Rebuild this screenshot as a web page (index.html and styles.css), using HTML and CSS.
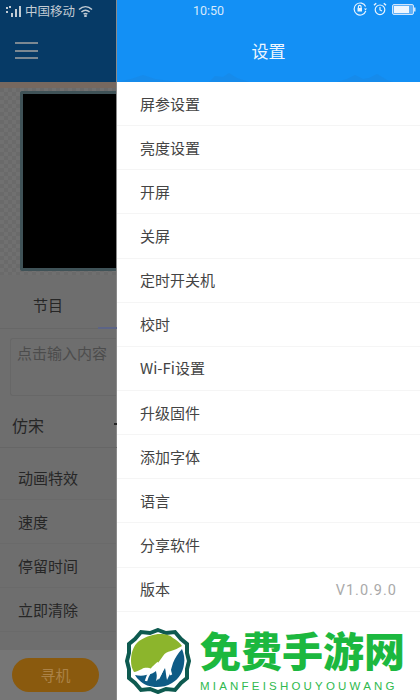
FILE: index.html
```html
<!DOCTYPE html>
<html lang="zh">
<head>
  <meta charset="UTF-8">
  <meta name="viewport" content="width=device-width, initial-scale=1.0">
  <title>设置</title>
  <link rel="stylesheet" href="styles.css">
</head>
<body>
  <div class="screen">

    <!-- 被遮住的主界面 -->
    <div class="main">
      <div class="topbar">
        <div class="status-left">
          <svg class="signal" width="16" height="12" viewBox="0 0 16 12">
            <rect x="0" y="2" width="2" height="2" fill="#c3ccd4"/>
            <rect x="3" y="1" width="2" height="2" fill="#c3ccd4"/>
            <rect x="0" y="6" width="2" height="2" fill="#c3ccd4"/>
            <rect x="5" y="8" width="2" height="4" fill="#c3ccd4"/>
            <rect x="9" y="4" width="2" height="8" fill="#c3ccd4"/>
            <rect x="13" y="1" width="2" height="11" fill="#c3ccd4"/>
          </svg>
          <span>中国移动</span>
          <svg class="wifi" width="15" height="12" viewBox="0 0 15 12" fill="none" stroke="#c3ccd4" stroke-width="1.5">
            <path d="M1 4.5C5 .8 10 .8 14 4.5"/>
            <path d="M3.4 7C6 4.7 9 4.7 11.6 7"/>
            <path d="M5.6 9.2C6.8 8.2 8.2 8.2 9.4 9.2"/>
            <circle cx="7.5" cy="11" r=".6"/>
          </svg>
        </div>
        <div class="menu-btn"><i></i><i></i><i></i></div>
      </div>
      <div class="band"></div>
      <div class="preview-wrap"><div class="preview"></div></div>
      <div class="tabs"><span>节目</span><i class="tab-line"></i></div>
      <div class="input-box">点击输入内容</div>
      <div class="font-row"><span>仿宋</span><i class="font-arrow"></i></div>
      <div class="opt">动画特效</div>
      <div class="opt">速度</div>
      <div class="opt">停留时间</div>
      <div class="opt">立即清除</div>
      <div class="bottom-bar"><div class="find-btn">寻机</div></div>
    </div>

    <!-- 设置抽屉 -->
    <div class="drawer">
      <div class="drawer-head">
        <div class="status-right">
          <span class="time">10:50</span>
          <div class="status-icons">
            <svg width="15" height="14" viewBox="0 0 15 14" fill="none" stroke="#e8f3fe" stroke-width="1.2">
              <path d="M12.6 4.5A6 6 0 1 0 12.8 9"/>
              <path d="M11 6.5h3l-1.500 2z" fill="#e8f3fe" stroke="none"/>
              <rect x="4.500" y="6" width="4.500" height="3.500" fill="#e8f3fe" stroke="none"/>
              <path d="M5.400 6V4.800a1.300 1.300 0 0 1 2.700 0V6"/>
            </svg>
            <svg width="14" height="14" viewBox="0 0 14 14" fill="none" stroke="#e8f3fe" stroke-width="1.2">
              <circle cx="7" cy="7.800" r="4.800"/>
              <path d="M7 5v3l2 1"/>
              <path d="M1 3.200L3.200 1.200M13 3.200L10.800 1.200" stroke-width="1.500"/>
            </svg>
            <svg width="24" height="11" viewBox="0 0 24 11">
              <rect x="0.500" y="0.500" width="21" height="10" rx="1.500" fill="#5fb0f8" stroke="#cfe5fc"/>
              <rect x="2" y="2" width="15" height="7" fill="#eef6fe"/>
              <rect x="22" y="3.500" width="1.500" height="4" fill="#cfe5fc"/>
            </svg>
          </div>
        </div>
        <h1>设置</h1>
        <svg class="hills" width="303" height="12" viewBox="0 0 303 12">
          <path d="M0 12L14 9 26 5 38 9 60 12zM92 12l6-6 8 1 6-4 8 5 12 4zM220 12l10-3 8-4 8 4 6-1 8-4 10 6 6 2z" fill="#1a86e2" opacity=".55"/>
        </svg>
      </div>

      <ul class="menu">
        <li>屏参设置</li>
        <li>亮度设置</li>
        <li>开屏</li>
        <li>关屏</li>
        <li>定时开关机</li>
        <li>校时</li>
        <li>Wi-Fi设置</li>
        <li>升级固件</li>
        <li>添加字体</li>
        <li>语言</li>
        <li>分享软件</li>
        <li>版本<span class="version">V1.0.9.0</span></li>
      </ul>

      <div class="brand">
        <svg class="brand-logo" width="66" height="66" viewBox="0 0 66 66">
          <path d="M33 2l8 3 9-1 6 7 6 5 0 9 2 8-2 8 0 9-6 5-6 7-9-1-8 3-8-3-9 1-6-7-6-5 0-9-2-8 2-8 0-9 6-5 6-7 9 1z" fill="#fff" stroke="#0e5a50" stroke-width="4"/>
          <path d="M6 33C6 25 8 18 14 13 22 8 29 6 35 6c6 0 10 1 13 4 4 2 7 5 9 8-4 2-7 4-11 5-4 1-6 2-8 5-3 4-6 9-11 13-3-1-7-2-10 0-3 1-6 3-8 3-2-3-3-7-3-11z" fill="#8cb52c"/>
          <path d="M57 21c2 5 3 10 2 15-1 8-5 15-12 19-5 3-10 4-15 4-7 0-13-2-18-7-2-2-3-3-4-5 4 1 8 1 11 0 5-1 8-2 10-4 1 3 1 6 0 10 4-3 6-8 9-13 1 4 1 8 2 12 3-5 4-11 6-17 2-5 5-10 9-14z" fill="#0e5b85"/>
          <path d="M21 53c2-7 6-13 11-17 1 4 0 8 2 13 4-7 5-16 11-22-1 7-1 14 1 20" fill="none" stroke="#fff" stroke-width="2.500"/>
        </svg>
        <div class="brand-text">
          <div class="brand-name">免费手游网</div>
          <div class="brand-pinyin">MIANFEISHOUYOUWANG</div>
        </div>
      </div>
    </div>
  </div>
</body>
</html>
```

FILE: styles.css
```css
* { box-sizing: border-box; }
html, body { margin: 0; padding: 0; }
body { width: 420px; height: 700px; overflow: hidden; font-family: "Noto Sans CJK SC", "Noto Sans", sans-serif; background: #6f6f6f; }
.screen { display: flex; width: 420px; height: 700px; }

/* main */
.main { width: 117px; height: 700px; overflow: hidden; flex: none; display: flex; flex-direction: column; background: #6e6e6e; color: #262626; }
.topbar { height: 82px; flex: none; background: #063a66; padding: 3px 0 0 6px; }
.status-left { display: flex; align-items: center; height: 15px; font-size: 12.500px; line-height: 15px; color: #c3ccd4; white-space: nowrap; }
.signal { margin-right: 3px; }
.wifi { margin-left: 3px; }
.menu-btn { display: flex; flex-direction: column; gap: 5.500px; width: 23px; margin: 24px 0 0 9px; }
.menu-btn i { display: block; height: 2px; background: #7b8892; }
.band { height: 6px; flex: none; background: #76685f; }
.preview-wrap { height: 187px; flex: none; padding: 3px 0 0 20px; background: repeating-conic-gradient(#707070 0 25%, #6a6a6a 0 50%) 0 0 / 8px 8px; }
.preview { width: 110px; height: 180px; background: #000; border: 3px solid #3f5257; border-right: none; border-radius: 3px 0 0 3px; }
.tabs { height: 54px; flex: none; position: relative; padding: 19px 0 0 33px; font-size: 15px; line-height: 22px; border-bottom: 1px solid #676767; }
.tab-line { position: absolute; left: 98px; right: 0; bottom: -1px; height: 2px; background: #5c6486; }
.input-box { height: 58px; flex: none; margin: 9px 0 0 10px; padding: 3px 0 0 6px; border: 1px solid #676767; border-right: none; border-radius: 3px 0 0 3px; font-size: 15px; line-height: 22px; color: #4c4c4c; white-space: nowrap; }
.font-row { height: 52px; flex: none; position: relative; padding: 17px 0 0 12px; font-size: 16px; line-height: 24px; border-bottom: 1px solid #666; }
.font-arrow { position: absolute; left: 114px; top: 27px; width: 3px; height: 2px; background: #262626; }
.opt { height: 44.100px; flex: none; padding: 0 0 0 18px; font-size: 15px; line-height: 44px; border-bottom: 1px solid #6a6a6a; white-space: nowrap; }
.font-row + .opt { margin-top: 8px; }
.bottom-bar { flex: 1; margin-top: 18px; padding: 8px 0 0 12px; background: #767676; }
.find-btn { width: 87px; height: 34px; border-radius: 17px; background: #8a5a0e; color: #ab8247; font-size: 15px; line-height: 34px; text-align: center; }

/* drawer */
.drawer { flex: 1; display: flex; flex-direction: column; background: #fff; box-shadow: -1px 0 0 #8a8a8a; }
.drawer-head { height: 82px; flex: none; position: relative; background: #1390f5; color: #fff; }
.status-right { position: relative; display: flex; align-items: center; height: 20px; }
.time { margin-left: 76px; font-family: "Roboto", sans-serif; font-size: 12.500px; color: #d6e9fc; }
.status-icons { position: absolute; left: 236px; top: 2px; display: flex; align-items: center; gap: 5px; }
.drawer-head h1 { margin: 19px 0 0; font-size: 17px; font-weight: 400; line-height: 24px; text-align: center; color: #eef6fe; }
.hills { position: absolute; left: 0; bottom: 0; }
.menu { list-style: none; margin: 0; padding: 0; flex: none; }
.menu li { display: flex; justify-content: space-between; align-items: center; height: 44.150px; padding: 0 24px 1px 23px; font-size: 15px; color: #444; border-bottom: 1px solid #f5f5f5; }
.version { margin-top: 3px; font-family: "Roboto", sans-serif; font-size: 14.500px; letter-spacing: 1px; color: #aaa; margin-right: -1px; }

/* watermark */
.brand { flex: 1; display: flex; align-items: flex-start; padding: 16px 0 0 8px; background: #fff; overflow: hidden; }
.brand-logo { flex: none; }
.brand-text { margin-left: 9px; margin-top: -1px; }
.brand-name { font-family: "Noto Sans CJK SC", sans-serif; font-size: 41px; font-weight: 900; line-height: 44px; color: #1cb83f; white-space: nowrap; }
.brand-pinyin { margin-top: 8px; font-family: "Liberation Sans", sans-serif; font-size: 11.500px; line-height: 14px; letter-spacing: 3.200px; color: #2fb94e; white-space: nowrap; }
```
